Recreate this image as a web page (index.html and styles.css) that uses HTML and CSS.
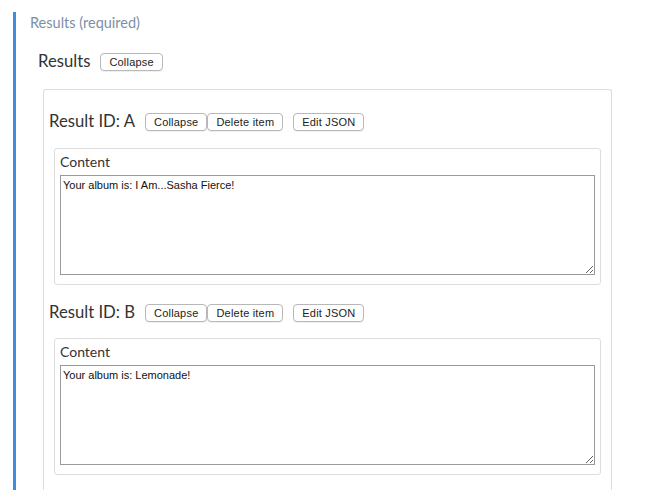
FILE: index.html
```html
<!DOCTYPE html>
<html>
<head>
<meta charset="utf-8">
<link rel="stylesheet" href="styles.css">
</head>
<body>
<div class="field">
  <div class="field-label">Results (required)</div>
  <div class="heading-row top">
    <span class="title">Results</span>
    <button class="btn">Collapse</button>
  </div>
  <div class="list">
    <div class="item">
      <div class="heading-row">
        <span class="title">Result ID: A</span>
        <div class="btn-group">
          <button class="btn">Collapse</button><button class="btn">Delete item</button>
        </div>
        <button class="btn">Edit JSON</button>
      </div>
      <div class="card">
        <div class="card-label">Content</div>
        <textarea class="input">Your album is: I Am...Sasha Fierce!</textarea>
      </div>
    </div>
    <div class="item second">
      <div class="heading-row">
        <span class="title">Result ID: B</span>
        <div class="btn-group">
          <button class="btn">Collapse</button><button class="btn">Delete item</button>
        </div>
        <button class="btn">Edit JSON</button>
      </div>
      <div class="card">
        <div class="card-label">Content</div>
        <textarea class="input">Your album is: Lemonade!</textarea>
      </div>
    </div>
  </div>
</div>
</body>
</html>
```

FILE: styles.css
```css
html, body {
  margin: 0;
  padding: 0;
  background: #fff;
  height: 100%;
  overflow: hidden;
}
body {
  font-family: "Lato", "Noto Sans", sans-serif;
  color: #333;
}
.field {
  margin: 12px 0 0 13px;
  border-left: 3px solid #3f8ddd;
  padding-left: 14px;
  height: 478px;
}
.field-label {
  font-size: 14.5px;
  line-height: 20px;
  padding-top: 1px;
  margin-bottom: -1px;
  color: #7b8fa7;
}
.heading-row {
  display: flex;
  align-items: center;
  height: 18px;
  margin: 19px 0 17px 0;
}
.heading-row.top {
  margin: 21px 0 18px 8px;
}
.title {
  font-size: 16.7px;
  line-height: 18px;
  color: #333;
  margin-right: 10px;
  position: relative;
  top: -1px;
}
.btn-group {
  display: flex;
  margin-right: 10px;
}
.btn {
  font-family: "Liberation Sans", Arial, sans-serif;
  font-size: 11px;
  letter-spacing: 0.2px;
  height: 18px;
  padding: 0 8px;
  background: #fff;
  color: #222;
  border: 1px solid #b8b8b8;
  border-radius: 4px;
  box-shadow: 0 1px 0 rgba(0,0,0,0.06);
  margin: 0;
  line-height: 16px;
}
.list {
  margin-left: 13px;
  width: 569px;
  box-sizing: border-box;
  border: 1px solid #dddddd;
  border-bottom: none;
  border-radius: 3px 3px 0 0;
  padding: 4px 5px 0 5px;
  height: 401px;
  overflow: hidden;
}
.item.second .heading-row {
  margin-bottom: 16px;
}
.card {
  margin: 0 5px;
  border: 1px solid #dddddd;
  border-radius: 3px;
  padding: 3px 5px 9px 5px;
}
.card-label {
  font-size: 14px;
  line-height: 20px;
  margin-bottom: 3px;
  color: #333;
}
.input {
  display: block;
  box-sizing: border-box;
  width: 100%;
  height: 100px;
  margin: 0;
  padding: 2px;
  border: 1px solid #9a9a9a;
  font-family: "Liberation Sans", Arial, sans-serif;
  font-size: 11px;
  line-height: 14px;
  color: #111;
  resize: both;
}
```
